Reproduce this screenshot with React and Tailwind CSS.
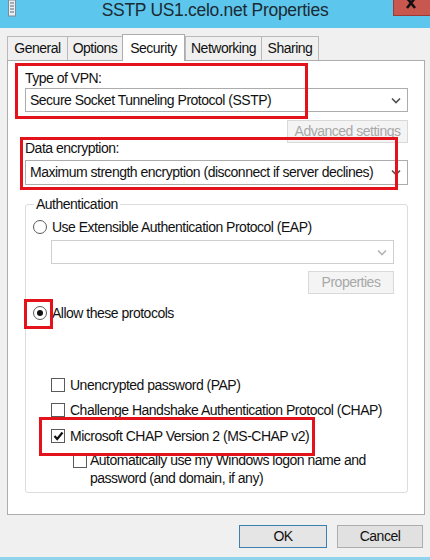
import React from "react";

const font = { fontFamily: '"Liberation Sans", Arial, sans-serif' };

function Chevron({ light }) {
  return (
    <svg width="10" height="7" viewBox="0 0 10 7" className="shrink-0">
      <path d="M1 1.5 L5 5.5 L9 1.5" fill="none" stroke={light ? "#b5b5b5" : "#505050"} strokeWidth="1.6" />
    </svg>
  );
}

function Radio({ checked }) {
  return (
    <span className="w-[14px] h-[14px] rounded-full border border-[#5a5a5a] bg-white flex items-center justify-center shrink-0">
      {checked && <span className="w-[6px] h-[6px] rounded-full bg-[#111]" />}
    </span>
  );
}

function Check({ checked }) {
  return (
    <span className="w-[14px] h-[14px] border border-[#5a5a5a] bg-white flex items-center justify-center shrink-0">
      {checked && (
        <svg width="11" height="10" viewBox="0 0 11 10">
          <path d="M1.5 5 L4.2 8 L9.5 1.5" fill="none" stroke="#111" strokeWidth="2.2" />
        </svg>
      )}
    </span>
  );
}

export default function App() {
  const tabs = ["General", "Options", "Security", "Networking", "Sharing"];
  const widths = ["w-[61px]", "w-[56px]", "w-[63px]", "w-[77px]", "w-[58px]"];

  return (
    <div className="relative w-[430px] h-[560px] bg-[#f0f0f0] overflow-hidden text-[14px] tracking-[-0.5px] text-[#111] whitespace-nowrap border-b-[3px] border-[#8fd3ec]" style={font}>
      {/* title bar */}
      <div className="h-[28px] bg-[#5cc6ec] flex items-start relative">
        <div className="w-[8px]" />
        <svg width="8" height="17" viewBox="0 0 8 17" className="shrink-0">
          <rect x="0.5" y="0" width="7" height="16" fill="#e8eef3" stroke="#7d8c99" />
          <path d="M2 3h4M2 6h4M2 9h4M2 12h4" stroke="#5a6a78" strokeWidth="1" />
        </svg>
        <div className="flex-1 text-center text-[17.5px] tracking-[-0.3px] leading-[21px] text-[#1c2a33] pl-[21px]">
          SSTP US1.celo.net Properties
        </div>
        <div className="w-[37px] h-[16px] bg-[#c8574f] flex justify-center items-start border-l border-b border-[#9b3b36]">
          <svg width="14" height="10" viewBox="0 0 14 10">
            <path d="M2 -2 L10 8 M10 -2 L2 8" stroke="#111" strokeWidth="2.6" />
          </svg>
        </div>
      </div>

      {/* tabs */}
      <div className="h-[32px] flex items-end pl-[7px]">
        {tabs.map((t, i) =>
          t === "Security" ? (
            <div key={t} className={`${widths[i]} h-[27px] -mb-px bg-white border border-b-0 border-[#adadad] flex items-start justify-center pt-[3px] z-10 relative`}>
              {t}
            </div>
          ) : (
            <div key={t} className={`${widths[i]} h-[24px] bg-[#f0f0f0] border border-[#b9b9b9] border-b-0 -mr-px flex items-center justify-center`}>
              {t}
            </div>
          )
        )}
      </div>

      {/* panel */}
      <div className="ml-[7px] w-[418px] h-[455px] bg-white border border-[#adadad] flex flex-col">
        <div className="mt-[8px] ml-[17px] leading-[18px]">Type of VPN:</div>
        <div className="mt-[1px] ml-[17px] w-[383px] h-[24px] border border-[#acacac] bg-white flex items-center justify-between pl-[4px] pr-[6px]">
          <span>Secure Socket Tunneling Protocol (SSTP)</span>
          <Chevron />
        </div>
        <div className="mt-[8px] ml-[279px] w-[121px] h-[23px] border border-[#d9d9d9] bg-[#f4f4f4] text-[#a8a8a8] flex items-center justify-center">
          Advanced settings
        </div>
        <div className="-mt-[4px] ml-[17px] leading-[18px]">Data encryption:</div>
        <div className="mt-[3px] ml-[17px] w-[383px] h-[25px] border border-[#acacac] bg-white flex items-center justify-between pl-[4px] pr-[6px]">
          <span>Maximum strength encryption (disconnect if server declines)</span>
          <Chevron />
        </div>

        {/* Authentication group */}
        <div className="mt-[19px] ml-[17px] w-[383px] border border-[#dcdcdc] rounded-[3px] flex flex-col pb-[5px]">
          <div className="-mt-[10px] ml-[8px] px-[2px] bg-white w-fit leading-[18px]">Authentication</div>
          <div className="mt-[5px] pl-[7px] flex items-center gap-[5px] leading-[18px]">
            <Radio />
            <span>Use Extensible Authentication Protocol (EAP)</span>
          </div>
          <div className="mt-[4px] ml-[25px] w-[343px] flex flex-col">
            <div className="h-[24px] border border-[#cfcfcf] bg-white flex items-center justify-end pr-[6px]">
              <Chevron light />
            </div>
            <div className="mt-[7px] self-end w-[86px] h-[23px] border border-[#d9d9d9] bg-[#f4f4f4] text-[#a8a8a8] flex items-center justify-center">
              Properties
            </div>
          </div>
          <div className="mt-[10px] pl-[7px] flex items-center gap-[5px] leading-[18px]">
            <Radio checked />
            <span>Allow these protocols</span>
          </div>
          <div className="mt-[54px] pl-[25px] flex items-center gap-[5px] leading-[18px]">
            <Check />
            <span>Unencrypted password (PAP)</span>
          </div>
          <div className="mt-[7px] pl-[25px] flex items-center gap-[5px] leading-[18px]">
            <Check />
            <span>Challenge Handshake Authentication Protocol (CHAP)</span>
          </div>
          <div className="mt-[8px] pl-[25px] flex items-center gap-[5px] leading-[18px]">
            <Check checked />
            <span>Microsoft CHAP Version 2 (MS-CHAP v2)</span>
          </div>
          <div className="mt-[6px] pl-[47px] flex items-start gap-[3px] leading-[18px]">
            <span className="mt-[3px]"><Check /></span>
            <span>
              Automatically use my Windows logon name and
              <br />
              password (and domain, if any)
            </span>
          </div>
        </div>
      </div>

      {/* buttons */}
      <div className="mt-[10px] flex justify-end gap-[10px] pr-[7px]">
        <div className="w-[88px] h-[23px] border border-[#3c7fb1] bg-[#e5e5e5] flex items-center justify-center">OK</div>
        <div className="w-[86px] h-[23px] border border-[#adadad] bg-[#e1e1e1] flex items-center justify-center">Cancel</div>
      </div>

      {/* red annotation boxes */}
      <div className="absolute left-[15px] top-[63px] w-[293px] h-[56px] border-[3px] border-[#e3121b]" />
      <div className="absolute left-[20px] top-[137px] w-[378px] h-[53px] border-[3px] border-[#e3121b]" />
      <div className="absolute left-[24px] top-[299px] w-[29px] h-[30px] border-[3px] border-[#e3121b]" />
      <div className="absolute left-[39px] top-[417px] w-[276px] h-[39px] border-[3px] border-[#e3121b]" />
    </div>
  );
}
